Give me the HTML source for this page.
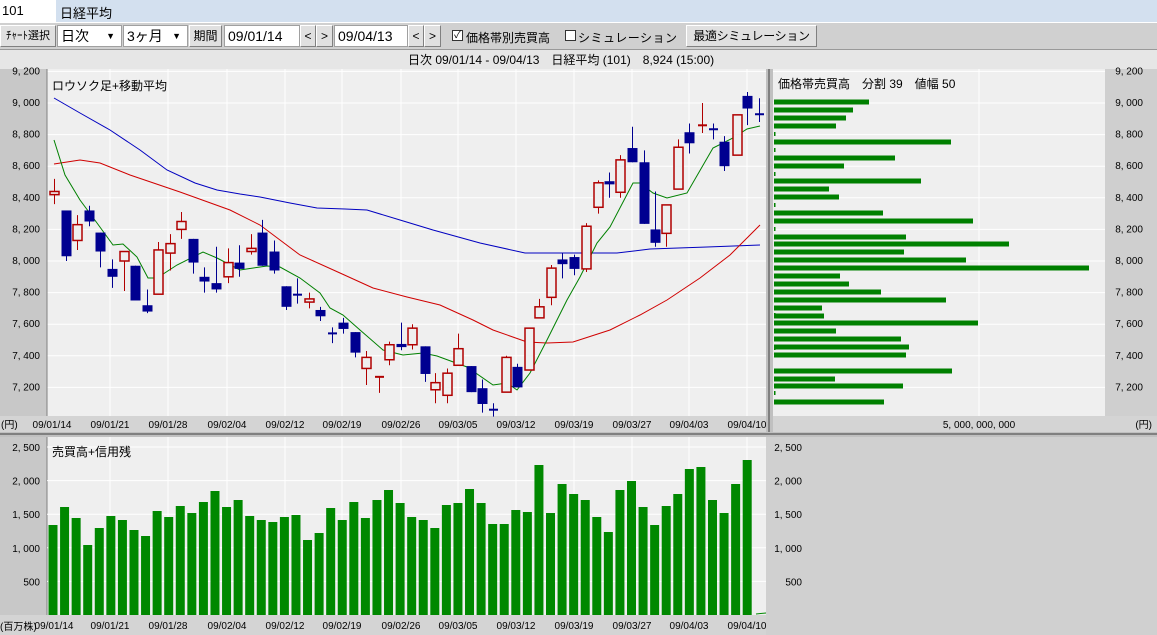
<!DOCTYPE html>
<html><head><meta charset="utf-8"><style>
*{margin:0;padding:0;box-sizing:border-box}
body{width:1157px;height:635px;overflow:hidden;background:#d4d4d4;font-family:"Liberation Sans","Noto Sans CJK JP",sans-serif;font-size:12px;color:#000;position:relative}
.a{position:absolute;white-space:nowrap}
.btn{position:absolute;top:25px;height:22px;background:#e0e0e0;border:1px solid;border-color:#fff #808080 #808080 #fff;font-size:12px;line-height:20px;text-align:center;overflow:hidden}
.inp{position:absolute;top:25px;height:22px;background:#fff;border:1px solid #a0a0a0;font-size:14px;line-height:20px;padding-left:3px}
</style></head><body>
<div class="a" style="left:0;top:0;width:1157px;height:22px;background:#d3e0ef"></div>
<div class="a" style="left:0;top:0;width:56px;height:22px;background:#fff;font-size:13px;line-height:22px;padding-left:2px">101</div>
<div class="a" style="left:60px;top:3px;font-size:13px">日経平均</div>
<div class="a" style="left:0;top:22px;width:1157px;height:27px;background:#d0d0d0;border-top:1px solid #fff"></div>
<div class="btn" style="left:0;width:56px;font-size:11px">ﾁｬｰﾄ選択</div>
<div class="inp" style="left:57px;width:65px">日次<span style="position:absolute;right:6px;font-size:9px">▼</span></div>
<div class="inp" style="left:123px;width:65px">3ヶ月<span style="position:absolute;right:6px;font-size:9px">▼</span></div>
<div class="btn" style="left:189px;width:33px">期間</div>
<div class="inp" style="left:224px;width:76px">09/01/14</div>
<div class="btn" style="left:300px;width:16px">&lt;</div><div class="btn" style="left:316px;width:17px">&gt;</div>
<div class="inp" style="left:334px;width:74px">09/04/13</div>
<div class="btn" style="left:408px;width:16px">&lt;</div><div class="btn" style="left:424px;width:17px">&gt;</div>
<div class="a" style="left:452px;top:30px;width:11px;height:11px;background:#fff;border:1px solid #333;font-size:10px;line-height:9px;text-align:center">✓</div>
<div class="a" style="left:466px;top:29px;font-size:12px">価格帯別売買高</div>
<div class="a" style="left:565px;top:30px;width:11px;height:11px;background:#fff;border:1px solid #333"></div>
<div class="a" style="left:578px;top:29px;font-size:12px;letter-spacing:0.5px">シミュレーション</div>
<div class="btn" style="left:686px;width:131px;font-size:12px;letter-spacing:-0.3px">最適シミュレーション</div>
<div class="a" style="left:0;top:49px;width:1157px;height:20px;background:#e6e6e6;border-top:1px solid #999"></div>
<div class="a" style="left:408px;top:51px;font-size:12px">日次 09/01/14 - 09/04/13　日経平均 (101)　8,924 (15:00)</div>
<svg class="a" style="left:0;top:0" width="1157" height="635" id="s" font-family="Liberation Sans, Noto Sans CJK JP, sans-serif" font-size="10"></svg>
<script>
var s=document.getElementById('s'),h='';
function R(x,y,w,hh,f,st){h+='<rect x="'+x+'" y="'+y+'" width="'+w+'" height="'+hh+'" fill="'+f+'"'+(st?' stroke="'+st+'"':'')+'/>';}
function L(x1,y1,x2,y2,c,w){h+='<line x1="'+x1+'" y1="'+y1+'" x2="'+x2+'" y2="'+y2+'" stroke="'+c+'" stroke-width="'+(w||1)+'"/>';}
function T(x,y,t,a,fs){h+='<text x="'+x+'" y="'+y+'"'+(a?' text-anchor="'+a+'"':'')+(fs?' font-size="'+fs+'"':'')+'>'+t+'</text>';}
function P(pts,c){h+='<polyline fill="none" stroke="'+c+'" stroke-width="1" points="'+pts+'"/>';}
R(0,69,47,347,'#c8c8c8');R(47,69,719,347,'#efefef');R(766,69,7,363,'#c0c0c0');L(769,69,769,432,'#808080',2);
R(773,69,332,347,'#efefef');R(1105,69,52,347,'#cfcfcf');
R(0,416,766,16,'#d4d4d4');R(773,416,384,16,'#d4d4d4');
R(0,432,1157,5,'#c0c0c0');L(0,434,1157,434,'#808080',2);
R(0,437,47,178,'#c8c8c8');R(47,437,719,178,'#efefef');R(766,437,391,198,'#d0d0d0');R(0,615,766,20,'#d4d4d4');
function Y(p){return 103+(9000-p)*0.158;}
var dates=[[52,'09/01/14'],[110,'09/01/21'],[168,'09/01/28'],[227,'09/02/04'],[285,'09/02/12'],[342,'09/02/19'],[401,'09/02/26'],[458,'09/03/05'],[516,'09/03/12'],[574,'09/03/19'],[632,'09/03/27'],[689,'09/04/03'],[747,'09/04/10']];
for(var p=7200;p<=9200;p+=200){var y=Y(p);L(47,y,766,y,'#fff');L(773,y,1105,y,'#fff');var t=(p/1000|0)+', '+String(p%1000).padStart(3,'0');T(40,y+3,t,'end');T(1143,y+3,t,'end');}
dates.forEach(function(d,i){if(i>0){L(d[0],69,d[0],416,'#fff');L(d[0],437,d[0],615,'#fff');}T(d[0],428,d[1],'middle');T(d[0]+(i==0?2:0),629,d[1],'middle');});
L(979,69,979,416,'#fff');
L(47,69,47,416,'#808080');L(47,437,47,615,'#808080');
for(var v=500;v<=2500;v+=500){var y=615-v*0.0672;L(47,y,766,y,'#fff');var t=v>=1000?(v/1000|0)+', '+String(v%1000).padStart(3,'0'):''+v;T(40,y+4,t,'end');T(802,y+4,t,'end');}
T(1,428,'(円)');T(1152,428,'(円)','end');T(979,428,'5, 000, 000, 000','middle');
T(0,630,'(百万株)');
var hb=[[102,869],[110,853],[118,846],[126,836],[142,951],[158,895],[166,844],[181,921],[189,829],[197,839],[213,883],[221,973],[237,906],[244,1009],[252,904],[260,966],[268,1089],[276,840],[284,849],[292,881],[300,946],[308,822],[316,824],[323,978],[331,836],[339,901],[347,909],[355,906],[371,952],[379,835],[386,903],[402,884]];
hb.forEach(function(b){R(774,b[0]-2.5,b[1]-774,5,'#008000');});
[134,150,174,205,229,315,348,393].forEach(function(y){R(774,y-2,1.5,4,'#008000');});
P('54,98 80,113 110,130 140,150 167,170 195,183 217,190 240,194 260,197 290,203 317,208 345,209 367,210 400,220 433,230 480,243 525,253 570,253 617,253 650,249 707,247 760,245','#0000c0');
P('54,164 80,160 100,163 130,175 180,192 230,210 260,225 300,255 340,273 373,288 407,297 440,305 473,320 493,330 527,342 547,343 573,342 610,330 640,315 667,300 700,278 730,255 760,225','#d00000');
P('54,140 65,175 80,200 97,223 113,245 123,244 137,257 148,278 157,278 177,265 203,252 217,258 240,270 267,266 280,267 300,278 320,293 330,308 343,315 360,330 383,350 403,355 423,353 437,356 467,367 493,385 507,383 517,390 530,373 547,340 567,300 580,277 597,243 610,227 633,183 640,183 653,193 667,198 687,193 713,148 733,138 747,129 760,126','#008000');
var C=[[54,8420,8440,8520,8360,1],[66,8320,8030,8320,8000,0],[77,8130,8230,8290,8070,1],[89,8320,8250,8350,8220,0],[100,8180,8060,8180,7960,0],[112,7950,7900,8010,7830,0],[124,8000,8060,8060,7810,1],[135,7970,7750,7970,7750,0],[147,7720,7680,7820,7670,0],[158,7790,8070,8120,7790,1],[170,8050,8110,8170,7940,1],[181,8200,8250,8310,8140,1],[193,8140,7990,8140,7920,0],[204,7900,7870,7960,7800,0],[216,7860,7820,8090,7800,0],[228,7900,7990,8080,7860,1],[239,7990,7950,8100,7900,0],[251,8060,8080,8170,8040,1],[262,8180,7970,8260,7970,0],[274,8060,7940,8130,7920,0],[286,7840,7710,7840,7690,0],[297,7790,7780,7890,7730,0],[309,7740,7760,7800,7700,1],[320,7690,7650,7710,7620,0],[332,7545,7540,7580,7480,0],[343,7610,7570,7640,7540,0],[355,7550,7420,7550,7390,0],[366,7320,7390,7430,7215,1],[379,7270,7270,7270,7165,1],[389,7375,7470,7490,7340,1],[401,7475,7455,7610,7435,0],[412,7470,7575,7600,7440,1],[425,7460,7285,7460,7235,0],[435,7185,7230,7290,7100,1],[447,7150,7290,7320,7100,1],[458,7340,7445,7540,7340,1],[471,7335,7170,7335,7170,0],[482,7195,7095,7250,7040,0],[493,7062,7058,7100,7015,0],[506,7170,7390,7400,7170,1],[517,7330,7200,7350,7200,0],[529,7310,7575,7575,7310,1],[539,7640,7710,7760,7640,1],[551,7770,7955,7975,7720,1],[562,8010,7980,8050,7890,0],[574,8025,7950,8040,7910,0],[586,7950,8220,8240,7930,1],[598,8340,8495,8510,8300,1],[609,8505,8485,8560,8400,0],[620,8435,8640,8670,8400,1],[632,8715,8625,8850,8625,0],[644,8625,8235,8700,8235,0],[655,8200,8115,8440,8090,0],[666,8175,8355,8355,8090,1],[678,8455,8720,8770,8455,1],[689,8815,8745,8870,8680,0],[702,8858,8862,9000,8810,1],[713,8837,8833,8870,8770,0],[724,8755,8600,8790,8570,0],[737,8670,8925,8925,8670,1],[747,9045,8965,9070,8860,0],[759,8932,8928,9030,8880,0]];
C.forEach(function(c){var col=c[5]?'#b00000':'#000090';L(c[0]+.5,Y(c[3]),c[0]+.5,Y(c[4]),col);var t=Y(Math.max(c[1],c[2])),b=Y(Math.min(c[1],c[2]));if(b-t<2){L(c[0]-4,t+.5,c[0]+5,t+.5,col,2);}else if(c[5]){h+='<rect x="'+(c[0]-4)+'" y="'+t+'" width="9" height="'+(b-t)+'" fill="#efefef" stroke="'+col+'" stroke-width="1.5"/>';}else R(c[0]-4.5,t,10,b-t,col);});
var V=[525,507,518,545,528,516,520,530,536,511,517,506,513,502,491,507,500,516,520,522,517,515,540,533,508,520,502,518,500,490,503,517,520,528,505,503,489,503,524,524,510,512,465,513,484,494,500,517,532,490,481,507,525,506,494,469,467,500,513,484,460];
V.forEach(function(t,i){var x=53+i*11.57;R(x-4.5,t,9,615-t,'#008800');});
L(756,614,766,613,'#008800');
T(52,90,'ロウソク足+移動平均',null,12);T(778,88,'価格帯売買高　分割 39　値幅 50',null,12);T(52,456,'売買高+信用残',null,12);
s.innerHTML=h;
</script>
</body></html>
